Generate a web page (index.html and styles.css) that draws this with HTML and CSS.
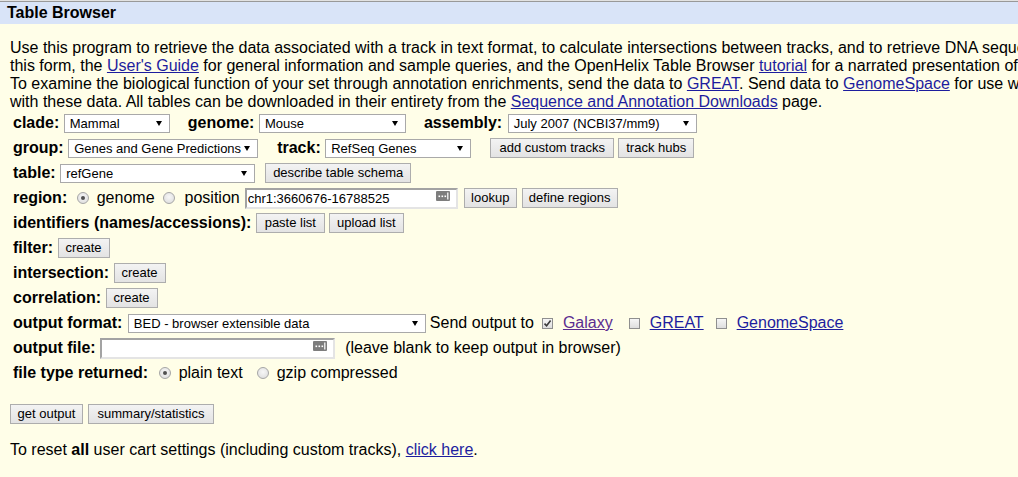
FILE: index.html
```html
<!DOCTYPE html>
<html>
<head>
<meta charset="utf-8">
<title>Table Browser</title>
<link rel="stylesheet" href="styles.css">
</head>
<body>
<div class="topline"></div>
<div class="titlebar">Table Browser</div>
<div class="intro">
  <div class="line">Use this program to retrieve the data associated with a track in text format, to calculate intersections between tracks, and to retrieve DNA sequence covered by a track. For help in using this application see <a href="#">Using the Table Browser</a> for a description of the controls in</div>
  <div class="line">this form, the <a href="#">User's Guide</a> for general information and sample queries, and the OpenHelix Table Browser <a href="#">tutorial</a> for a narrated presentation of the software tools and usage examples.</div>
  <div class="line">To examine the biological function of your set through annotation enrichments, send the data to <a href="#">GREAT</a>. Send data to <a href="#">GenomeSpace</a> for use with diverse computational tools. Refer to the <a href="#">Credits</a> page for the list of contributors and usage restrictions associated</div>
  <div class="line">with these data. All tables can be downloaded in their entirety from the <a href="#">Sequence and Annotation Downloads</a> page.</div>
</div>

<div class="form">
  <div class="row">
    <b class="lbl">clade:</b>
    <div class="sel w106">Mammal</div>
    <b class="lbl ml18">genome:</b>
    <div class="sel w147">Mouse</div>
    <b class="lbl ml18">assembly:</b>
    <div class="sel w189 ml1">July 2007 (NCBI37/mm9)</div>
  </div>
  <div class="row">
    <b class="lbl">group:</b>
    <div class="sel w190">Genes and Gene Predictions</div>
    <b class="lbl ml19">track:</b>
    <div class="sel w146">RefSeq Genes</div>
    <button class="btn w124 ml19">add custom tracks</button>
    <button class="btn w76 ml4">track hubs</button>
  </div>
  <div class="row">
    <b class="lbl">table:</b>
    <div class="sel w195">refGene</div>
    <button class="btn w146 ml10">describe table schema</button>
  </div>
  <div class="row">
    <b class="lbl">region:</b>
    <span class="radio on ml5"></span>
    <span class="txt ml8">genome</span>
    <span class="radio ml8"></span>
    <span class="txt ml10">position</span>
    <div class="field w213 ml5">
      <input class="fin" type="text" value="chr1:3660676-16788525">
      <svg class="kicon" width="14" height="10" viewBox="0 0 14 10"><rect x="0" y="0" width="14" height="10" rx="1" fill="#7d7d7d"/><rect x="2.5" y="4.5" width="1.6" height="1.6" fill="#fff"/><rect x="5.5" y="4.5" width="1.6" height="1.6" fill="#fff"/><rect x="8.5" y="4.5" width="1.6" height="1.6" fill="#fff"/><rect x="11.2" y="1.5" width="1.2" height="7" fill="#fff"/></svg>
    </div>
    <button class="btn w53 ml6">lookup</button>
    <button class="btn w96 ml5">define regions</button>
  </div>
  <div class="row">
    <b class="lbl">identifiers (names/accessions):</b>
    <button class="btn w69">paste list</button>
    <button class="btn w75 ml4">upload list</button>
  </div>
  <div class="row">
    <b class="lbl">filter:</b>
    <button class="btn w52">create</button>
  </div>
  <div class="row">
    <b class="lbl">intersection:</b>
    <button class="btn w52">create</button>
  </div>
  <div class="row">
    <b class="lbl">correlation:</b>
    <button class="btn w52">create</button>
  </div>
  <div class="row">
    <b class="lbl">output format:</b>
    <div class="sel w298 ml1">BED - browser extensible data</div>
    <span class="txt ml4">Send output to</span>
    <span class="check on ml8"><svg width="9" height="9" viewBox="0 0 9 9"><path d="M1.5 4.6 L3.6 6.8 L7.6 1.6" fill="none" stroke="#3a3a3a" stroke-width="1.6"/></svg></span>
    <a href="#" class="txt visited ml10">Galaxy</a>
    <span class="check ml16"></span>
    <a href="#" class="txt ml10">GREAT</a>
    <span class="check ml12"></span>
    <a href="#" class="txt ml10">GenomeSpace</a>
  </div>
  <div class="row">
    <b class="lbl">output file:</b>
    <div class="field w235">
      <input class="fin" type="text" value="">
      <svg class="kicon" width="14" height="10" viewBox="0 0 14 10"><rect x="0" y="0" width="14" height="10" rx="1" fill="#7d7d7d"/><rect x="2.5" y="4.5" width="1.6" height="1.6" fill="#fff"/><rect x="5.5" y="4.5" width="1.6" height="1.6" fill="#fff"/><rect x="8.5" y="4.5" width="1.6" height="1.6" fill="#fff"/><rect x="11.2" y="1.5" width="1.2" height="7" fill="#fff"/></svg>
    </div>
    <span class="txt ml10">(leave blank to keep output in browser)</span>
  </div>
  <div class="row">
    <b class="lbl">file type returned:</b>
    <span class="radio on ml6"></span>
    <span class="txt ml8">plain text</span>
    <span class="radio ml14"></span>
    <span class="txt ml8">gzip compressed</span>
  </div>
</div>

<div class="actions">
  <button class="btn w73">get output</button>
  <button class="btn w126 ml5">summary/statistics</button>
</div>

<p class="reset">To reset <b>all</b> user cart settings (including custom tracks), <a href="#">click here</a>.</p>
</body>
</html>
```

FILE: styles.css
```css
html, body {
  margin: 0;
  padding: 0;
  overflow: hidden;
  background: #fffee8;
}
body {
  width: 1018px;
  height: 477px;
  font-family: "Liberation Sans", Arial, sans-serif;
  font-size: 16px;
  color: #000;
}
a {
  color: #1d1d9e;
}
a.visited {
  color: #5b2d90;
}
.topline {
  height: 1px;
  background: #e2e2e2;
  border-bottom: 1px solid #999;
}
.titlebar {
  height: 22px;
  line-height: 22px;
  background: #d9e4f8;
  font-weight: bold;
  padding-left: 7px;
}
.intro {
  margin-top: 14.5px;
  padding-left: 10px;
  line-height: 18px;
}
.line {
  white-space: nowrap;
}
.form {
  padding-left: 13px;
}
.row {
  display: flex;
  align-items: center;
  height: 25px;
  white-space: nowrap;
}
.lbl {
  font-weight: bold;
  margin-right: 4.5px;
}
.txt {
  line-height: 18px;
}
.sel {
  position: relative;
  box-sizing: border-box;
  height: 19px;
  border: 1px solid #a9a9a9;
  background: #fff;
  font-size: 13px;
  line-height: 17px;
  padding-left: 5px;
  overflow: hidden;
}
.sel::after {
  content: "";
  position: absolute;
  right: 7px;
  top: 6px;
  border-left: 3px solid transparent;
  border-right: 3px solid transparent;
  border-top: 5px solid #000;
}
.btn {
  box-sizing: border-box;
  height: 20px;
  padding: 0;
  margin-top: 0;
  margin-bottom: 0;
  border: 1px solid #adadad;
  border-radius: 0;
  background: linear-gradient(#f3f3f3, #e3e3e3);
  font-family: "Liberation Sans", Arial, sans-serif;
  font-size: 13px;
  line-height: 18px;
  color: #000;
  text-align: center;
}
.field {
  position: relative;
  box-sizing: border-box;
  height: 21px;
}
.fin {
  box-sizing: border-box;
  width: 100%;
  height: 21px;
  margin: 0;
  padding: 0 0 0 1px;
  border-style: solid;
  border-width: 2px;
  border-color: #a3a3a3 #e4e4e4 #e4e4e4 #a3a3a3;
  background: #fff;
  font-family: "Liberation Sans", Arial, sans-serif;
  font-size: 13px;
  color: #000;
  outline: none;
}
.kicon {
  position: absolute;
  right: 8px;
  top: 3px;
}
.radio {
  position: relative;
  box-sizing: border-box;
  width: 12px;
  height: 12px;
  border-radius: 50%;
  border: 1px solid #a6a6a6;
  background: radial-gradient(circle at 50% 40%, #f7f7f7, #dadada);
}
.radio.on::after {
  content: "";
  position: absolute;
  left: 3px;
  top: 3px;
  width: 4px;
  height: 4px;
  border-radius: 50%;
  background: #505050;
}
.check {
  box-sizing: border-box;
  width: 11px;
  height: 11px;
  border: 1px solid #8f8f8f;
  background: linear-gradient(#f6f6f6, #dedede);
  display: flex;
  align-items: center;
  justify-content: center;
}
.actions {
  display: flex;
  align-items: center;
  margin-top: 18.5px;
  padding-left: 10px;
  height: 20px;
}
.reset {
  margin: 17px 0 0 10px;
  line-height: 18px;
}

.w52 { width: 52px; }
.w53 { width: 53px; }
.w69 { width: 69px; }
.w73 { width: 73px; }
.w75 { width: 75px; }
.w76 { width: 76px; }
.w96 { width: 96px; }
.w106 { width: 106px; }
.w124 { width: 124px; }
.w126 { width: 126px; }
.w146 { width: 146px; }
.w147 { width: 147px; }
.w189 { width: 189px; }
.w190 { width: 190px; }
.w195 { width: 195px; }
.w213 { width: 213px; }
.w235 { width: 235px; }
.w298 { width: 298px; }

.ml1 { margin-left: 1px; }
.ml4 { margin-left: 4px; }
.ml5 { margin-left: 5px; }
.ml6 { margin-left: 6px; }
.ml8 { margin-left: 8px; }
.ml10 { margin-left: 10px; }
.ml11 { margin-left: 11px; }
.ml12 { margin-left: 12px; }
.ml14 { margin-left: 14px; }
.ml16 { margin-left: 16px; }
.ml18 { margin-left: 18px; }
.ml19 { margin-left: 19px; }
```
